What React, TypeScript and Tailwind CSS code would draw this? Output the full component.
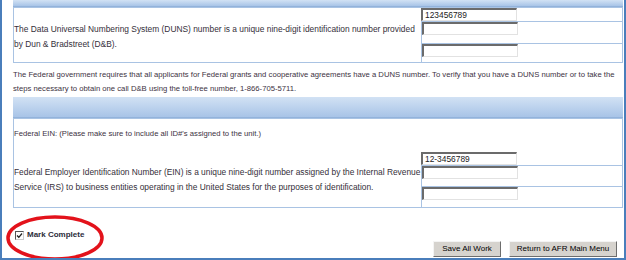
import React from 'react';

const font = { fontFamily: '"Liberation Sans", Arial, sans-serif' };

const Field = ({ value }: { value?: string }) => (
  <div className="w-[96px] h-[13px] bg-white border-t-2 border-l-2 border-b border-r border-t-[#6b6b6b] border-l-[#6b6b6b] border-b-[#e2e2e2] border-r-[#e2e2e2] pl-[2px] text-[8.4px] leading-[11px] text-[#222]">
    {value}
  </div>
);

const Band = ({ className }: { className: string }) => (
  <div className={`bg-linear-to-b from-[#d2e2f4] to-[#a8c4e7] border-b border-[#93b3db] ${className}`} />
);

const Button = ({ label, width }: { label: string; width: string }) => (
  <button
    className={`${width} h-[16px] bg-[#d6d3ce] border border-t-[#f4f4f4] border-l-[#f4f4f4] border-b-[#6d6d6d] border-r-[#6d6d6d] text-[8px] leading-none text-black`}
    style={font}
  >
    {label}
  </button>
);

export default function App() {
  return (
    <div
      className="relative w-[626px] h-[260px] bg-white border-l-2 border-r-2 border-b-2 border-[#4a7ebb] flex flex-col pl-[11px] pr-[1px] overflow-hidden"
      style={font}
    >
      <Band className="h-[7px]" />

      {/* DUNS */}
      <div className="h-[56px] border border-[#a9c3e3] grid grid-cols-[407px_1fr] grid-rows-[13px_22px_1fr] text-[#352f3a]">
        <div className="row-span-3 flex items-center pt-[3px] text-[8.4px] leading-[15px] whitespace-nowrap">
          <p>
            The Data Universal Numbering System (DUNS) number is a unique nine-digit identification number provided
            <br />
            by Dun &amp; Bradstreet (D&amp;B).
          </p>
        </div>
        <div>
          <Field value="123456789" />
        </div>
        <div className="border-t border-l border-[#a9c3e3]">
          <Field />
        </div>
        <div className="border-t border-l border-[#a9c3e3]">
          <Field />
        </div>
      </div>

      <p className="mt-[5px] text-[7.7px] leading-[14px] text-[#3d3242] whitespace-nowrap">
        The Federal government requires that all applicants for Federal grants and cooperative agreements have a DUNS number. To verify that you have a DUNS number or to take the
        <br />
        steps necessary to obtain one call D&amp;B using the toll-free number, 1-866-705-5711.
      </p>

      <Band className="mt-[1px] h-[21px]" />

      {/* EIN */}
      <div className="h-[90px] border border-[#a9c3e3] grid grid-cols-[407px_1fr] grid-rows-[33px_13px_21px_1fr] text-[#352f3a]">
        <div className="pt-[8px] text-[7.7px] leading-[14px] text-[#3d3242] whitespace-nowrap">
          Federal EIN: (Please make sure to include all ID#'s assigned to the unit.)
        </div>
        <div />
        <div className="row-span-3 flex items-center text-[8.4px] leading-[15px] whitespace-nowrap">
          <p>
            Federal Employer Identification Number (EIN) is a unique nine-digit number assigned by the Internal Revenue
            <br />
            Service (IRS) to business entities operating in the United States for the purposes of identification.
          </p>
        </div>
        <div>
          <Field value="12-3456789" />
        </div>
        <div className="border-t border-l border-[#a9c3e3]">
          <Field />
        </div>
        <div className="border-t border-l border-[#a9c3e3]">
          <Field />
        </div>
      </div>

      {/* footer */}
      <div className="flex-1 flex items-end justify-between pr-[6px]">
        <label className="flex items-center gap-[3px] ml-[2px] mb-[17px]">
          <span className="w-[9px] h-[9px] bg-white border border-t-[#555] border-l-[#555] border-b-[#ccc] border-r-[#ccc] flex items-center justify-center">
            <svg width="7" height="7" viewBox="0 0 7 7">
              <path d="M1 3.5 L2.8 5.3 L6 1.5" fill="none" stroke="#222" strokeWidth="1.3" />
            </svg>
          </span>
          <span className="text-[8px] font-bold text-[#2c2c3a]">Mark Complete</span>
        </label>
        <div className="flex gap-[8px] mb-[1px]">
          <Button label="Save All Work" width="w-[68px]" />
          <Button label="Return to AFR Main Menu" width="w-[108px]" />
        </div>
      </div>

      {/* red annotation circle */}
      <svg className="absolute left-[3px] top-[214px] pointer-events-none" width="100" height="48" viewBox="0 0 100 48">
        <ellipse cx="50" cy="24" rx="47" ry="21" fill="none" stroke="#e3121b" strokeWidth="3.5" />
      </svg>
    </div>
  );
}
